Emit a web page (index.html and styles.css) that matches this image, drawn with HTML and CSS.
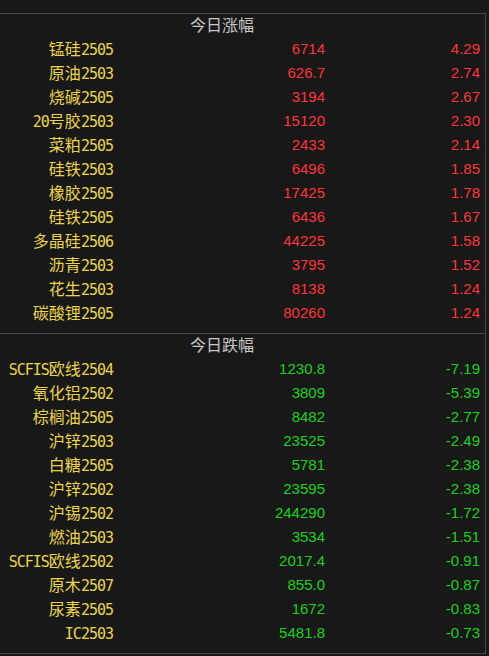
FILE: index.html
```html
<!DOCTYPE html>
<html lang="zh-CN">
<head>
  <meta charset="UTF-8">
  <title>今日涨跌幅</title>
  <link rel="stylesheet" href="styles.css">
</head>
<body>
  <div class="board">
    <div class="section" id="up">
      <div class="title">今日涨幅</div>
    </div>
    <div class="section" id="down">
      <div class="title">今日跌幅</div>
    </div>
  </div>

  <script>
    const upRows = [
      ['锰硅', '2505', '6714', '4.29'],
      ['原油', '2503', '626.7', '2.74'],
      ['烧碱', '2505', '3194', '2.67'],
      ['20号胶', '2503', '15120', '2.30'],
      ['菜粕', '2505', '2433', '2.14'],
      ['硅铁', '2503', '6496', '1.85'],
      ['橡胶', '2505', '17425', '1.78'],
      ['硅铁', '2505', '6436', '1.67'],
      ['多晶硅', '2506', '44225', '1.58'],
      ['沥青', '2503', '3795', '1.52'],
      ['花生', '2503', '8138', '1.24'],
      ['碳酸锂', '2505', '80260', '1.24']
    ];

    const downRows = [
      ['SCFIS欧线', '2504', '1230.8', '-7.19'],
      ['氧化铝', '2502', '3809', '-5.39'],
      ['棕榈油', '2505', '8482', '-2.77'],
      ['沪锌', '2503', '23525', '-2.49'],
      ['白糖', '2505', '5781', '-2.38'],
      ['沪锌', '2502', '23595', '-2.38'],
      ['沪锡', '2502', '244290', '-1.72'],
      ['燃油', '2503', '3534', '-1.51'],
      ['SCFIS欧线', '2502', '2017.4', '-0.91'],
      ['原木', '2507', '855.0', '-0.87'],
      ['尿素', '2505', '1672', '-0.83'],
      ['IC', '2503', '5481.8', '-0.73']
    ];

    // split latin letters from CJK so each gets its own font
    function nameHtml(name) {
      return name.replace(/([A-Za-z0-9]+)/g, '<span class="code">$1</span>');
    }

    function fill(id, rows, cls) {
      const section = document.getElementById(id);
      rows.forEach(r => {
        const row = document.createElement('div');
        row.className = 'row ' + cls;
        row.innerHTML =
          `<div class="name">${nameHtml(r[0])}<span class="code">${r[1]}</span></div>` +
          `<div class="num">${r[2]}</div>` +
          `<div class="num">${r[3]}</div>`;
        section.appendChild(row);
      });
    }

    fill('up', upRows, 'rise');
    fill('down', downRows, 'fall');
  </script>
</body>
</html>
```

FILE: styles.css
```css
body {
  margin: 0;
  background: #181818;
  font-family: "Noto Sans CJK SC", sans-serif;
}

.board {
  width: 485px;
  margin-top: 13px;
  border-top: 1px solid #474747;
  border-right: 1px solid #474747;
}

.section {
  padding-bottom: 7px;
  border-bottom: 1px solid #474747;
}

.title {
  height: 24px;
  line-height: 20px;
  padding-left: 190px;
  box-sizing: border-box;
  color: #c8c8c8;
  font-size: 16px;
}

.row {
  display: grid;
  grid-template-columns: 113px 212px 155px;
  height: 24px;
  padding-bottom: 4px;
  box-sizing: border-box;
  align-items: center;
}

.name {
  text-align: right;
  color: #ebd54a;
  font-size: 16px;
  line-height: 20px;
  white-space: nowrap;
}

.code {
  font-family: "DejaVu Sans Mono", monospace;
  font-size: 15px;
  letter-spacing: -1px;
  font-weight: 300;
}

.num {
  text-align: right;
  font-family: "Liberation Sans", Arial, sans-serif;
  font-size: 15px;
  line-height: 20px;
}

.rise .num {
  color: #ff3535;
}

.fall .num {
  color: #19d219;
}
```
